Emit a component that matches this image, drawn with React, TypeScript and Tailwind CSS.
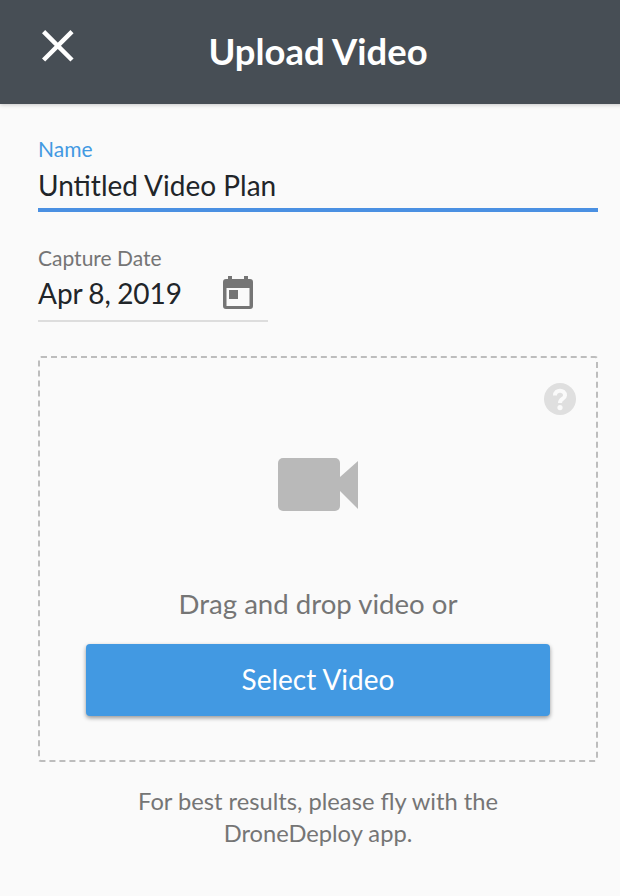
const App = () => {
  return (
    <div className="h-[896px] w-[620px] overflow-hidden bg-[#fafafa] font-['Lato',sans-serif]">
      <div className="w-[636px]">
        <header className="relative flex h-[104px] items-center justify-center bg-[#474e55] pb-[2px] shadow-[0_1px_4px_rgba(0,0,0,0.2)]">
          <button className="absolute left-[41px] top-[29px]">
            <svg width="34" height="34" viewBox="0 0 34 34" fill="none" stroke="white" strokeWidth="4.5">
              <path d="M2.6 2.6 L31 31 M31 2.6 L2.6 31" />
            </svg>
          </button>
          <h1 className="text-[36.4px] font-bold leading-none text-white">Upload Video</h1>
        </header>

        <div className="px-[38px] pt-[33px]">
          <label className="block text-[21px] leading-6 text-[#4299e2]">Name</label>
          <div className="border-b-4 border-[#4a90e2] pb-[5px] pt-[6px] text-[28px] leading-[36px] text-[#212529]">
            Untitled Video Plan
          </div>

          <div className="mt-[34px] w-[230px] border-b-2 border-[#dddddd]">
            <label className="block text-[21px] leading-6 text-[#757575]">Capture Date</label>
            <div className="flex items-start pb-[9px] pt-[6px]">
              <span className="-mt-px w-[185px] text-[28px] leading-[36px] text-[#212529] [word-spacing:-1px]">
                Apr 8, 2019
              </span>
              <svg width="30" height="33" viewBox="0 0 30 33">
                <path
                  fill="#757575"
                  fillRule="evenodd"
                  d="M3 3 H5 V0 H9 V3 H21 V0 H25 V3 H27 A3 3 0 0 1 30 6 V30 A3 3 0 0 1 27 33 H3 A3 3 0 0 1 0 30 V6 A3 3 0 0 1 3 3 Z M3.5 12 V30 H26.5 V12 Z M6 14 H15 V23 H6 Z"
                />
              </svg>
            </div>
          </div>

          <div className="relative mt-[34px] flex h-[406px] flex-col items-center rounded-[3px] border-2 border-dashed border-[#bdbdbd] pt-[100px]">
            <svg className="absolute right-[20px] top-[25px]" width="32" height="32" viewBox="0 0 32 32">
              <circle cx="16" cy="16" r="16" fill="#dfdfdf" />
              <path d="M11 12.5 C11 6 21 6 21 12.5 C21 16 16 15.5 16 20" fill="none" stroke="#fafafa" strokeWidth="4" />
              <circle cx="16" cy="24.6" r="2.6" fill="#fafafa" />
            </svg>
            <svg width="80" height="53" viewBox="0 0 80 53">
              <rect x="0" y="0" width="62" height="53" rx="5" fill="#b9b9b9" />
              <path d="M62 19 L80 3 V51 L62 33 Z" fill="#b9b9b9" />
            </svg>
            <p className="mt-[75px] text-[27.6px] leading-9 text-[#757575]">Drag and drop video or</p>
            <button className="mt-[22px] h-[72px] w-[464px] rounded-[4px] bg-[#4299e2] pb-[2px] text-[28px] text-white shadow-[0_2px_4px_rgba(0,0,0,0.4)]">
              Select Video
            </button>
          </div>

          <p className="mx-auto mt-[23px] w-[400px] text-center text-[23.7px] leading-8 text-[#757575]">
            For best results, please fly with the DroneDeploy app.
          </p>
        </div>
      </div>
    </div>
  );
};

export default App;
